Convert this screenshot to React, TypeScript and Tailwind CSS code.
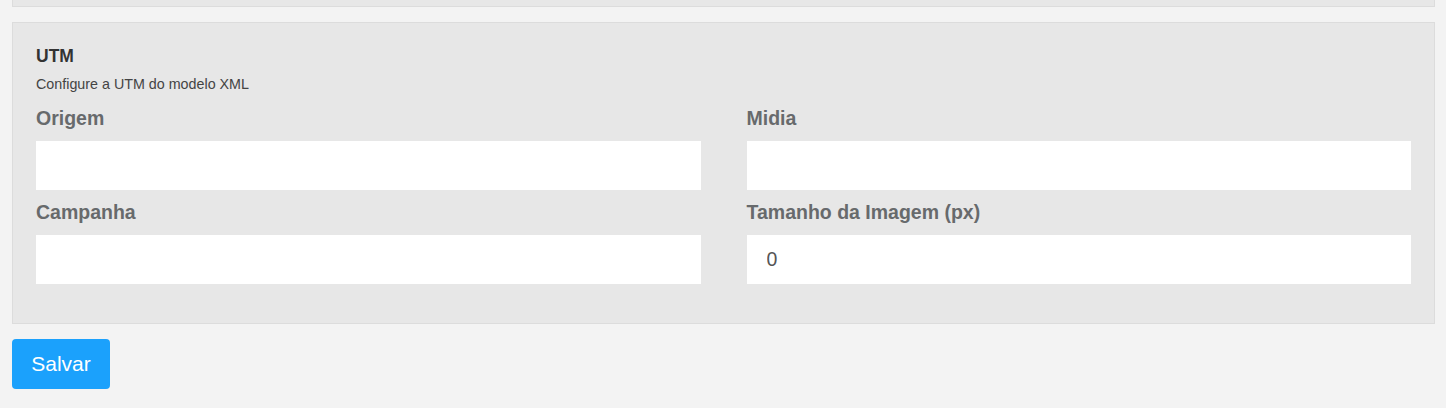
import React, { useState } from 'react';

const font = { fontFamily: '"Liberation Sans", Arial, sans-serif' };

interface FieldProps {
  label: string;
  value: string;
  onChange: (v: string) => void;
}

const Field: React.FC<FieldProps> = ({ label, value, onChange }) => (
  <div className="flex flex-col">
    <label className="text-[19.5px] leading-[28px] font-bold text-[#676a6c] mb-[9px]">{label}</label>
    <input
      type="text"
      value={value}
      onChange={(e) => onChange(e.target.value)}
      className="h-[49px] w-full bg-white px-[20px] text-[19.5px] text-[#555] outline-none"
    />
  </div>
);

export default function App() {
  const [origem, setOrigem] = useState('');
  const [midia, setMidia] = useState('');
  const [campanha, setCampanha] = useState('');
  const [tamanho, setTamanho] = useState('0');

  return (
    <div className="min-h-[408px] w-full bg-[#f3f3f3] overflow-hidden" style={font}>
      {/* Previous panel (cut off at top) */}
      <div className="ml-[12px] mr-[11px] h-[7px] bg-[#e7e7e7] border border-t-0 border-[#dcdcdc]" />

      {/* UTM panel */}
      <div className="ml-[12px] mr-[11px] mt-[15px] bg-[#e7e7e7] border border-[#dcdcdc] px-[23px] pt-[21px] pb-[39px]">
        <h3 className="text-[17.5px] leading-[25px] font-bold text-[#333]">UTM</h3>
        <p className="mt-[5px] text-[14.3px] leading-[20px] text-[#444]">Configure a UTM do modelo XML</p>

        <div className="mt-[10px] grid grid-cols-2 gap-x-[46px] gap-y-[8px]">
          <Field label="Origem" value={origem} onChange={setOrigem} />
          <Field label="Midia" value={midia} onChange={setMidia} />
          <Field label="Campanha" value={campanha} onChange={setCampanha} />
          <Field label="Tamanho da Imagem (px)" value={tamanho} onChange={setTamanho} />
        </div>
      </div>

      <div className="ml-[12px] mt-[15px]">
        <button className="h-[50px] w-[98px] rounded-[4px] bg-[#1ba1fc] text-white text-[21px]">
          Salvar
        </button>
      </div>
    </div>
  );
}
